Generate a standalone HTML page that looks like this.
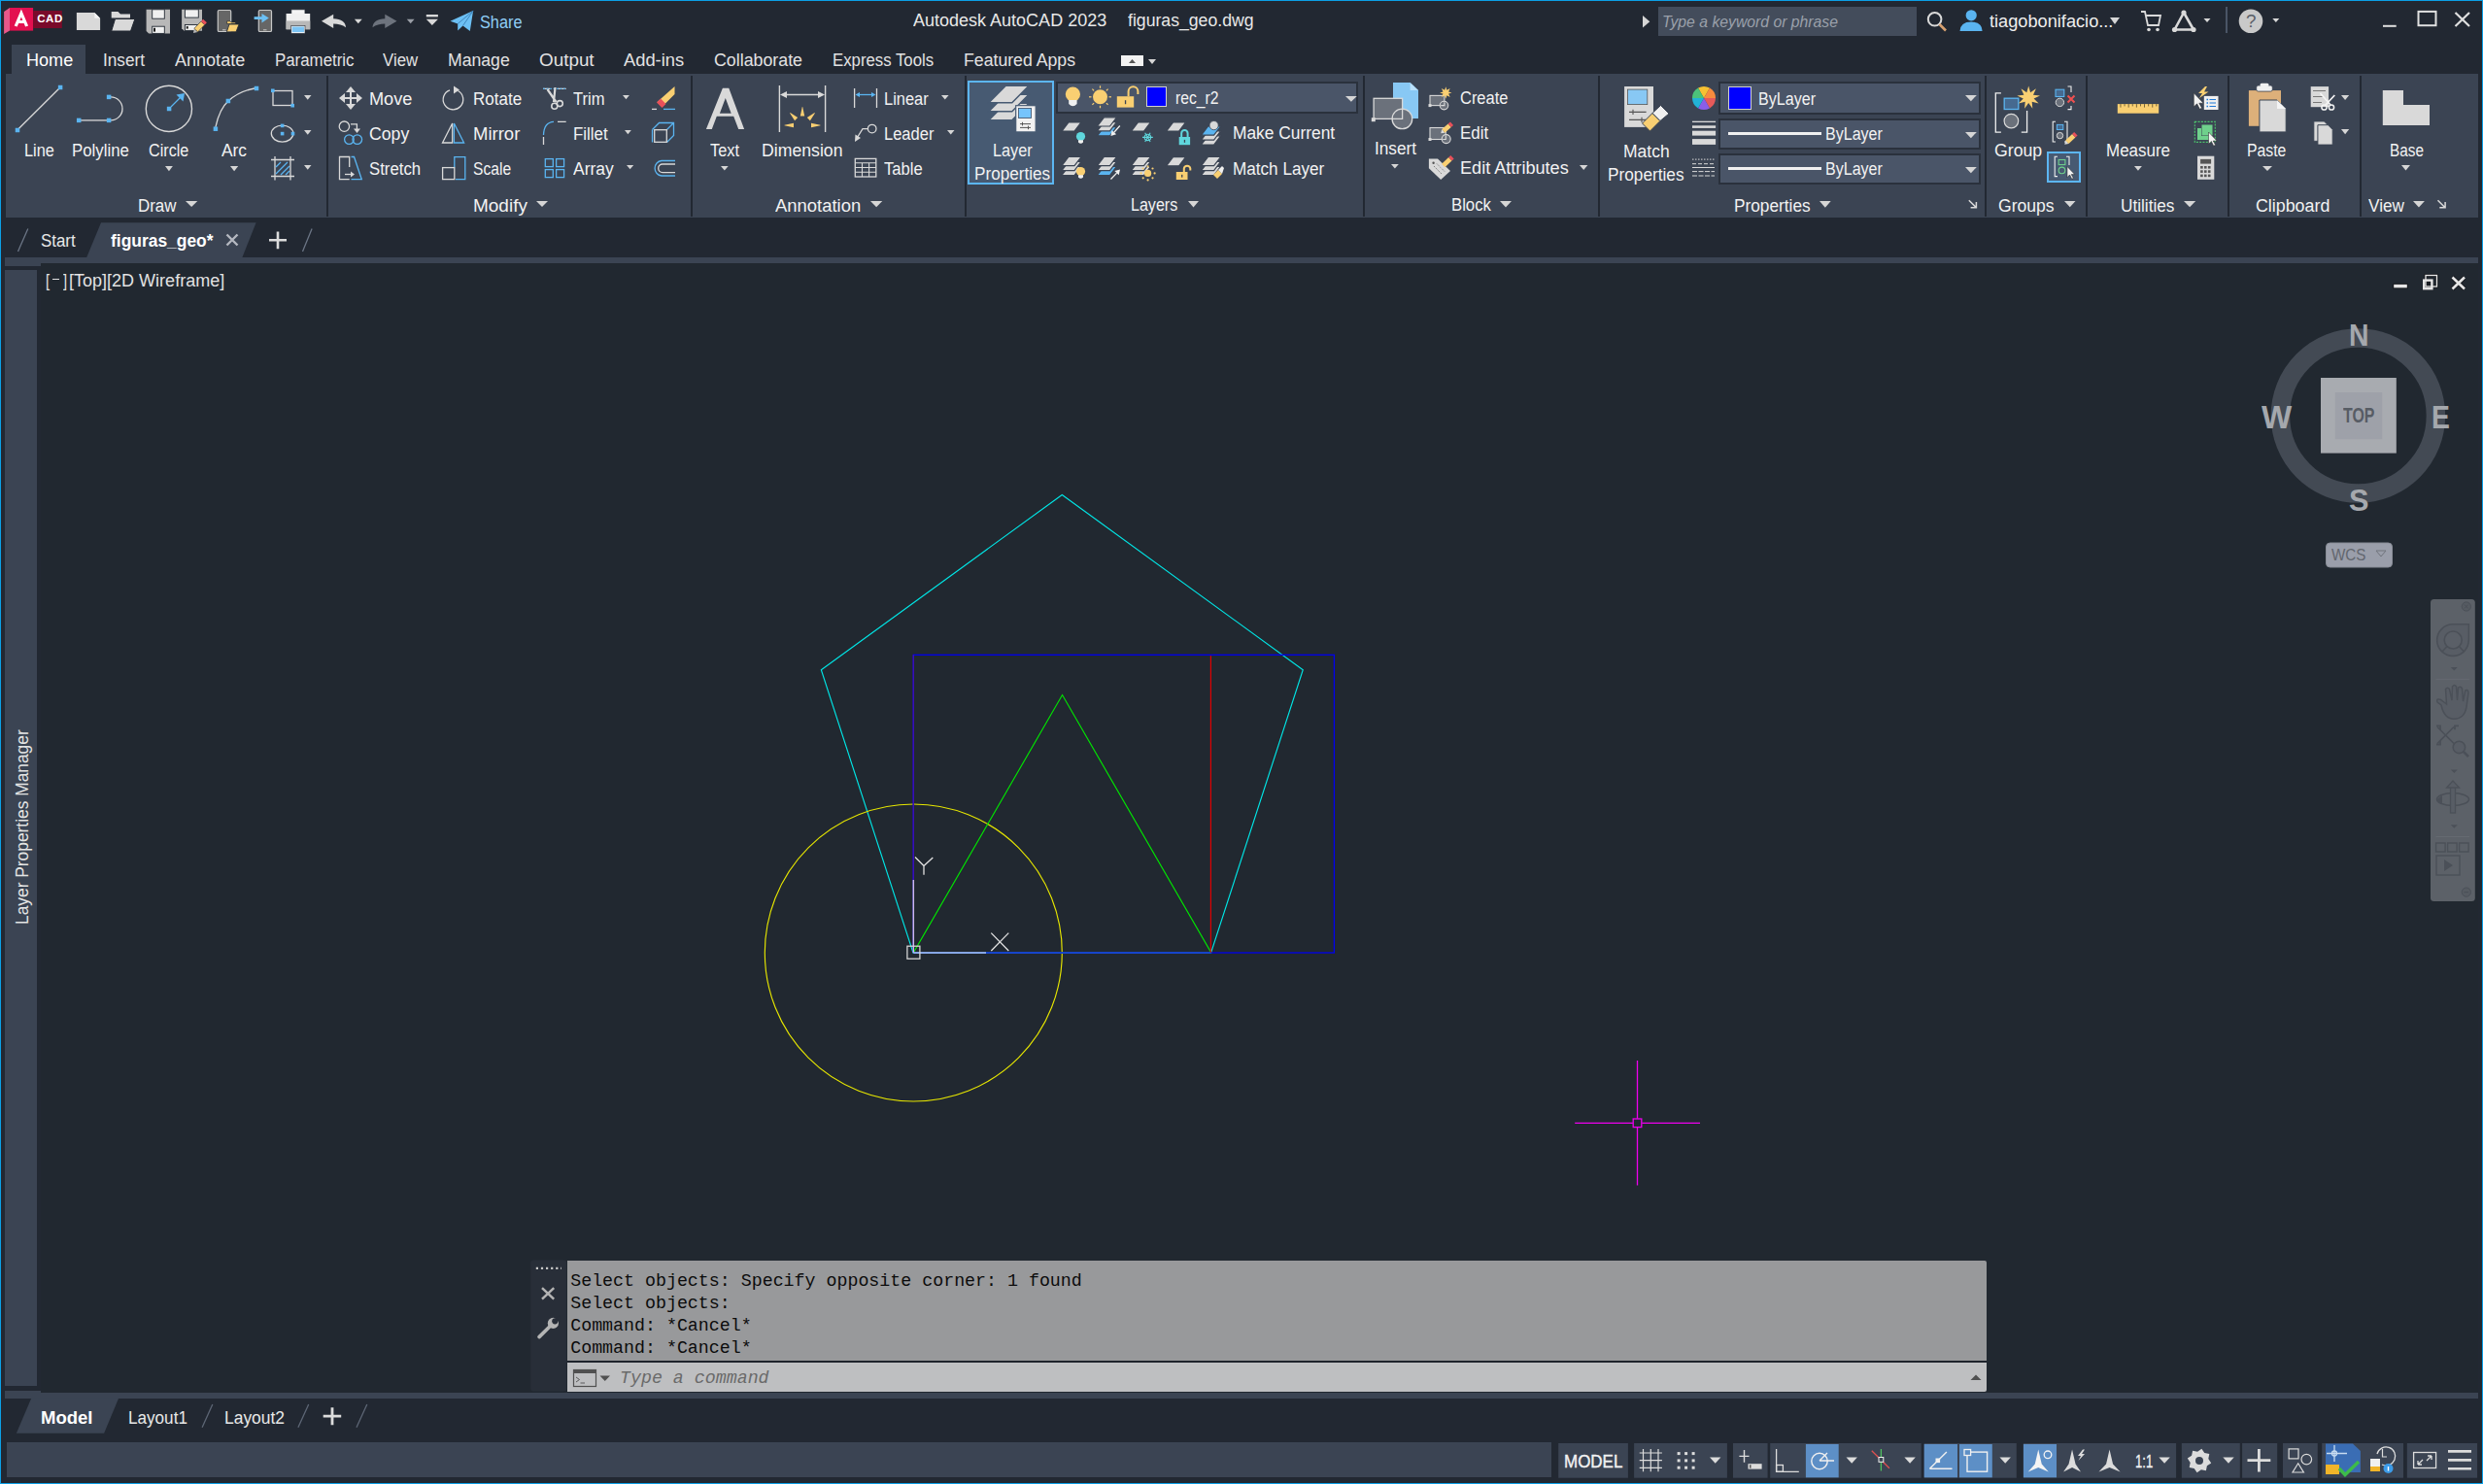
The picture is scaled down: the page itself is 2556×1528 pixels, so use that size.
<!DOCTYPE html><html><head><meta charset="utf-8"><style>
html,body{margin:0;padding:0;}
body{width:2556px;height:1528px;position:relative;overflow:hidden;background:#222832;font-family:"Liberation Sans",sans-serif;}
.t{position:absolute;white-space:nowrap;line-height:1;}
.r{position:absolute;}
svg.r{overflow:visible;}
</style></head><body>
<div class="r" style="left:12px;top:46px;width:76px;height:30px;background:#3b4453;"></div>
<div class="r" style="left:6px;top:76px;width:2545px;height:148px;background:#3b4453;"></div>
<div class="r" style="left:336px;top:78px;width:2px;height:145px;background:#222832;"></div>
<div class="r" style="left:711px;top:78px;width:2px;height:145px;background:#222832;"></div>
<div class="r" style="left:993px;top:78px;width:2px;height:145px;background:#222832;"></div>
<div class="r" style="left:1403px;top:78px;width:2px;height:145px;background:#222832;"></div>
<div class="r" style="left:1645px;top:78px;width:2px;height:145px;background:#222832;"></div>
<div class="r" style="left:2043px;top:78px;width:2px;height:145px;background:#222832;"></div>
<div class="r" style="left:2147px;top:78px;width:2px;height:145px;background:#222832;"></div>
<div class="r" style="left:2293px;top:78px;width:2px;height:145px;background:#222832;"></div>
<div class="r" style="left:2429px;top:78px;width:2px;height:145px;background:#222832;"></div>
<svg class="r" style="left:0px;top:0px;" width="400" height="300" viewBox="0 0 400 300"><polygon points="104,229.2 263.6,229.2 249.2,265.5 89,265.5" fill="#3b4453"/></svg>
<div class="r" style="left:5px;top:265px;width:2546px;height:6px;background:#3b4453;"></div>
<div class="r" style="left:5px;top:271px;width:37px;height:3px;background:#3b4453;"></div>
<div class="r" style="left:42px;top:271px;width:2509px;height:1163px;background:#212830;"></div>
<div class="r" style="left:5px;top:278px;width:33px;height:1149px;background:#3b4453;"></div>
<div class="r" style="left:42px;top:1434px;width:2509px;height:6px;background:#3b4453;"></div>
<div class="r" style="left:5px;top:1432px;width:37px;height:8px;background:#3b4453;"></div>
<svg class="r" style="left:0px;top:0px;" width="200" height="1528" viewBox="0 0 200 1528"><polygon points="32.2,1439.8 122.1,1439.8 107.1,1475.7 16.9,1475.7" fill="#3b4453"/></svg>
<div class="r" style="left:6.8px;top:1485px;width:1590px;height:36px;background:#3b4453;"></div>
<div class="r" style="left:0px;top:0px;width:2556px;height:1px;background:#0ba0e6;"></div>
<div class="r" style="left:0px;top:0px;width:1px;height:1528px;background:#0ba0e6;"></div>
<div class="r" style="left:2555px;top:0px;width:1px;height:1528px;background:#0ba0e6;"></div>
<div class="r" style="left:0px;top:1527px;width:2556px;height:1px;background:#0ba0e6;"></div>
<div class="t" style="left:939.6px;top:11.8px;font-size:18px;color:#e8e8e8;transform:scaleX(1.0003);transform-origin:0 0;">Autodesk AutoCAD 2023</div>
<div class="t" style="left:1160.5px;top:11.8px;font-size:18px;color:#e8e8e8;transform:scaleX(0.9804);transform-origin:0 0;">figuras_geo.dwg</div>
<div class="t" style="left:26.5px;top:53.1px;font-size:18px;color:#ffffff;transform:scaleX(1.0038);transform-origin:0 0;">Home</div>
<div class="t" style="left:105.7px;top:53.1px;font-size:18px;color:#e2e2e2;transform:scaleX(0.9552);transform-origin:0 0;">Insert</div>
<div class="t" style="left:179.6px;top:53.1px;font-size:18px;color:#e2e2e2;transform:scaleX(1.0019);transform-origin:0 0;">Annotate</div>
<div class="t" style="left:282.7px;top:53.1px;font-size:18px;color:#e2e2e2;transform:scaleX(0.9365);transform-origin:0 0;">Parametric</div>
<div class="t" style="left:394.3px;top:53.1px;font-size:18px;color:#e2e2e2;transform:scaleX(0.9330);transform-origin:0 0;">View</div>
<div class="t" style="left:461.3px;top:53.1px;font-size:18px;color:#e2e2e2;transform:scaleX(0.9792);transform-origin:0 0;">Manage</div>
<div class="t" style="left:555.4px;top:53.1px;font-size:18px;color:#e2e2e2;transform:scaleX(1.0475);transform-origin:0 0;">Output</div>
<div class="t" style="left:642.4px;top:53.1px;font-size:18px;color:#e2e2e2;transform:scaleX(1.0175);transform-origin:0 0;">Add-ins</div>
<div class="t" style="left:735.2px;top:53.1px;font-size:18px;color:#e2e2e2;transform:scaleX(0.9885);transform-origin:0 0;">Collaborate</div>
<div class="t" style="left:856.6px;top:53.1px;font-size:18px;color:#e2e2e2;transform:scaleX(0.9318);transform-origin:0 0;">Express Tools</div>
<div class="t" style="left:991.6px;top:53.1px;font-size:18px;color:#e2e2e2;transform:scaleX(0.9822);transform-origin:0 0;">Featured Apps</div>
<div class="r" style="left:1154px;top:57px;width:23px;height:11px;background:#f2f2f2;"></div>
<svg class="r" style="left:1162px;top:61px" width="7.0" height="4.0"><polygon points="0,4 3.5,0 7,4" fill="#555"/></svg>
<svg class="r" style="left:1182px;top:61px" width="8.0" height="5.0"><polygon points="0,0 8,0 4.0,5" fill="#d6d6d6"/></svg>
<div class="t" style="left:494.4px;top:13.8px;font-size:18px;color:#8fcdf5;transform:scaleX(0.9056);transform-origin:0 0;">Share</div>
<div class="r" style="left:1707px;top:7px;width:266px;height:30px;background:#434c5b;"></div>
<div class="t" style="left:1710.5px;top:14.1px;font-size:17px;color:#9aa0aa;transform:scaleX(0.9269);transform-origin:0 0;font-style:italic;">Type a keyword or phrase</div>
<svg class="r" style="left:1690.6px;top:16.2px" width="8" height="13"><polygon points="0,0 7.3,6.3 0,12.6" fill="#d6d6d6"/></svg>
<div class="t" style="left:2048.0px;top:12.8px;font-size:18px;color:#eeeeee;transform:scaleX(1.0104);transform-origin:0 0;">tiagobonifacio...</div>
<svg class="r" style="left:2172px;top:18px" width="10.0" height="7.0"><polygon points="0,0 10,0 5.0,7" fill="#d6d6d6"/></svg>
<div class="r" style="left:2291px;top:7px;width:2px;height:27px;background:#4a5566;"></div>
<div class="t" style="left:25.3px;top:145.9px;font-size:18px;color:#f2f2f2;transform:scaleX(0.9050);transform-origin:0 0;">Line</div>
<div class="t" style="left:73.9px;top:145.9px;font-size:18px;color:#f2f2f2;transform:scaleX(0.9344);transform-origin:0 0;">Polyline</div>
<div class="t" style="left:153.4px;top:145.9px;font-size:18px;color:#f2f2f2;transform:scaleX(0.8977);transform-origin:0 0;">Circle</div>
<div class="t" style="left:228.0px;top:145.9px;font-size:18px;color:#f2f2f2;transform:scaleX(0.9629);transform-origin:0 0;">Arc</div>
<div class="t" style="left:142.4px;top:202.5px;font-size:18px;color:#f2f2f2;transform:scaleX(0.9380);transform-origin:0 0;">Draw</div>
<svg class="r" style="left:191px;top:206.7px" width="12.3" height="6.1"><polygon points="0,0 12.300000000000011,0 6.150000000000006,6.100000000000023" fill="#d6d6d6"/></svg>
<svg class="r" style="left:169.8px;top:170.6px" width="7.9" height="5.3"><polygon points="0,0 7.899999999999977,0 3.9499999999999886,5.300000000000011" fill="#d6d6d6"/></svg>
<svg class="r" style="left:236.9px;top:170.6px" width="8.2" height="5.3"><polygon points="0,0 8.199999999999989,0 4.099999999999994,5.300000000000011" fill="#d6d6d6"/></svg>
<svg class="r" style="left:312.9px;top:97.8px" width="7.5" height="4.8"><polygon points="0,0 7.5,0 3.75,4.799999999999997" fill="#d6d6d6"/></svg>
<svg class="r" style="left:312.9px;top:134px" width="7.5" height="4.8"><polygon points="0,0 7.5,0 3.75,4.800000000000011" fill="#d6d6d6"/></svg>
<svg class="r" style="left:312.9px;top:169.7px" width="7.5" height="4.8"><polygon points="0,0 7.5,0 3.75,4.800000000000011" fill="#d6d6d6"/></svg>
<div class="t" style="left:380.4px;top:92.8px;font-size:18px;color:#f2f2f2;transform:scaleX(1.0087);transform-origin:0 0;">Move</div>
<div class="t" style="left:486.7px;top:92.8px;font-size:18px;color:#f2f2f2;transform:scaleX(0.9447);transform-origin:0 0;">Rotate</div>
<div class="t" style="left:590.0px;top:92.8px;font-size:18px;color:#f2f2f2;transform:scaleX(0.9202);transform-origin:0 0;">Trim</div>
<div class="t" style="left:380.4px;top:128.6px;font-size:18px;color:#f2f2f2;transform:scaleX(0.9828);transform-origin:0 0;">Copy</div>
<div class="t" style="left:486.7px;top:128.6px;font-size:18px;color:#f2f2f2;transform:scaleX(1.0279);transform-origin:0 0;">Mirror</div>
<div class="t" style="left:590.4px;top:128.6px;font-size:18px;color:#f2f2f2;transform:scaleX(0.9367);transform-origin:0 0;">Fillet</div>
<div class="t" style="left:380.4px;top:164.8px;font-size:18px;color:#f2f2f2;transform:scaleX(0.9312);transform-origin:0 0;">Stretch</div>
<div class="t" style="left:486.7px;top:164.8px;font-size:18px;color:#f2f2f2;transform:scaleX(0.8683);transform-origin:0 0;">Scale</div>
<div class="t" style="left:590.0px;top:164.8px;font-size:18px;color:#f2f2f2;transform:scaleX(0.9696);transform-origin:0 0;">Array</div>
<svg class="r" style="left:641.3px;top:98.4px" width="6.9" height="4.2"><polygon points="0,0 6.900000000000091,0 3.4500000000000455,4.199999999999989" fill="#d6d6d6"/></svg>
<svg class="r" style="left:642.9px;top:134.3px" width="6.8" height="4.2"><polygon points="0,0 6.800000000000068,0 3.400000000000034,4.199999999999989" fill="#d6d6d6"/></svg>
<svg class="r" style="left:644.8px;top:170.3px" width="7.2" height="4.2"><polygon points="0,0 7.2000000000000455,0 3.6000000000000227,4.199999999999989" fill="#d6d6d6"/></svg>
<div class="t" style="left:486.7px;top:202.5px;font-size:18px;color:#f2f2f2;transform:scaleX(1.0544);transform-origin:0 0;">Modify</div>
<svg class="r" style="left:552px;top:206.7px" width="12.0" height="6.1"><polygon points="0,0 12,0 6.0,6.100000000000023" fill="#d6d6d6"/></svg>
<div class="t" style="left:731.0px;top:145.6px;font-size:18px;color:#f2f2f2;transform:scaleX(0.9088);transform-origin:0 0;">Text</div>
<div class="t" style="left:784.2px;top:145.6px;font-size:18px;color:#f2f2f2;transform:scaleX(0.9819);transform-origin:0 0;">Dimension</div>
<svg class="r" style="left:742px;top:170.9px" width="7.7" height="4.5"><polygon points="0,0 7.7000000000000455,0 3.8500000000000227,4.5" fill="#d6d6d6"/></svg>
<div class="t" style="left:910.3px;top:92.8px;font-size:18px;color:#f2f2f2;transform:scaleX(0.9133);transform-origin:0 0;">Linear</div>
<div class="t" style="left:910.3px;top:128.5px;font-size:18px;color:#f2f2f2;transform:scaleX(0.9170);transform-origin:0 0;">Leader</div>
<div class="t" style="left:910.3px;top:164.7px;font-size:18px;color:#f2f2f2;transform:scaleX(0.9226);transform-origin:0 0;">Table</div>
<svg class="r" style="left:968.7px;top:98px" width="7.6" height="4.4"><polygon points="0,0 7.599999999999909,0 3.7999999999999545,4.400000000000006" fill="#d6d6d6"/></svg>
<svg class="r" style="left:974.5px;top:134px" width="7.5" height="4.4"><polygon points="0,0 7.5,0 3.75,4.400000000000006" fill="#d6d6d6"/></svg>
<div class="t" style="left:798.2px;top:202.5px;font-size:18px;color:#f2f2f2;transform:scaleX(1.0247);transform-origin:0 0;">Annotation</div>
<svg class="r" style="left:895.7px;top:206.7px" width="12.3" height="6.3"><polygon points="0,0 12.299999999999955,0 6.149999999999977,6.300000000000011" fill="#d6d6d6"/></svg>
<div class="r" style="left:996.4px;top:82.7px;width:88.6px;height:107px;background:#475a72;border:2px solid #5cb6f2;box-sizing:border-box;"></div>
<div class="t" style="left:1022.0px;top:145.7px;font-size:18px;color:#f2f2f2;transform:scaleX(0.9039);transform-origin:0 0;">Layer</div>
<div class="t" style="left:1003.2px;top:170.2px;font-size:18px;color:#f2f2f2;transform:scaleX(0.9520);transform-origin:0 0;">Properties</div>
<div class="r" style="left:1087.3px;top:84.4px;width:311.2px;height:32.2px;background:#4a5568;border:2px solid #2a313c;box-sizing:border-box;"></div>
<div class="t" style="left:1209.6px;top:91.9px;font-size:18px;color:#f2f2f2;transform:scaleX(0.8741);transform-origin:0 0;">rec_r2</div>
<svg class="r" style="left:1385px;top:99px" width="11.8" height="5.7"><polygon points="0,0 11.799999999999955,0 5.899999999999977,5.700000000000003" fill="#d6d6d6"/></svg>
<div class="r" style="left:1179.8px;top:89px;width:21.2px;height:20.8px;background:#0000ff;border:1.5px solid #d0d0d0;box-sizing:border-box;"></div>
<div class="t" style="left:1268.8px;top:128.4px;font-size:18px;color:#f2f2f2;transform:scaleX(0.9648);transform-origin:0 0;">Make Current</div>
<div class="t" style="left:1268.8px;top:164.6px;font-size:18px;color:#f2f2f2;transform:scaleX(0.9511);transform-origin:0 0;">Match Layer</div>
<div class="t" style="left:1164.2px;top:202.4px;font-size:18px;color:#f2f2f2;transform:scaleX(0.8921);transform-origin:0 0;">Layers</div>
<svg class="r" style="left:1222.6px;top:206.9px" width="11.0" height="6.4"><polygon points="0,0 11.0,0 5.5,6.400000000000006" fill="#d6d6d6"/></svg>
<div class="t" style="left:1414.8px;top:144.0px;font-size:18px;color:#f2f2f2;transform:scaleX(0.9552);transform-origin:0 0;">Insert</div>
<svg class="r" style="left:1431.7px;top:169px" width="7.8" height="4.6"><polygon points="0,0 7.7999999999999545,0 3.8999999999999773,4.599999999999994" fill="#d6d6d6"/></svg>
<div class="t" style="left:1502.6px;top:92.4px;font-size:18px;color:#f2f2f2;transform:scaleX(0.9143);transform-origin:0 0;">Create</div>
<div class="t" style="left:1502.6px;top:128.3px;font-size:18px;color:#f2f2f2;transform:scaleX(0.9414);transform-origin:0 0;">Edit</div>
<div class="t" style="left:1502.6px;top:164.3px;font-size:18px;color:#f2f2f2;transform:scaleX(1.0057);transform-origin:0 0;">Edit Attributes</div>
<svg class="r" style="left:1626.3px;top:169.6px" width="8.4" height="5.0"><polygon points="0,0 8.400000000000091,0 4.2000000000000455,5.0" fill="#d6d6d6"/></svg>
<div class="t" style="left:1493.7px;top:202.4px;font-size:18px;color:#f2f2f2;transform:scaleX(0.9292);transform-origin:0 0;">Block</div>
<svg class="r" style="left:1543.8px;top:206.6px" width="12.0" height="6.4"><polygon points="0,0 12.0,0 6.0,6.400000000000006" fill="#d6d6d6"/></svg>
<div class="t" style="left:1670.7px;top:146.7px;font-size:18px;color:#f2f2f2;transform:scaleX(0.9711);transform-origin:0 0;">Match</div>
<div class="t" style="left:1654.9px;top:171.3px;font-size:18px;color:#f2f2f2;transform:scaleX(0.9568);transform-origin:0 0;">Properties</div>
<div class="r" style="left:1769.3px;top:84.4px;width:269.4px;height:33.3px;background:#4a5568;border:2px solid #2a313c;box-sizing:border-box;"></div>
<div class="r" style="left:1769.3px;top:121.6px;width:269.4px;height:32.20000000000002px;background:#4a5568;border:2px solid #2a313c;box-sizing:border-box;"></div>
<div class="r" style="left:1769.3px;top:157.5px;width:269.4px;height:32.400000000000006px;background:#4a5568;border:2px solid #2a313c;box-sizing:border-box;"></div>
<div class="r" style="left:1779px;top:89.3px;width:23.8px;height:23.5px;background:#0000ff;border:1.5px solid #d0d0d0;box-sizing:border-box;"></div>
<div class="t" style="left:1810.0px;top:93.1px;font-size:18px;color:#f2f2f2;transform:scaleX(0.8935);transform-origin:0 0;">ByLayer</div>
<div class="r" style="left:1779px;top:136px;width:96px;height:3px;background:#f0f0f0;"></div>
<div class="r" style="left:1779px;top:172px;width:96px;height:3px;background:#f0f0f0;"></div>
<div class="t" style="left:1878.9px;top:128.5px;font-size:18px;color:#f2f2f2;transform:scaleX(0.8920);transform-origin:0 0;">ByLayer</div>
<div class="t" style="left:1878.9px;top:164.6px;font-size:18px;color:#f2f2f2;transform:scaleX(0.8920);transform-origin:0 0;">ByLayer</div>
<svg class="r" style="left:2023px;top:98px" width="11.8" height="6.2"><polygon points="0,0 11.799999999999955,0 5.899999999999977,6.200000000000003" fill="#d6d6d6"/></svg>
<svg class="r" style="left:2023px;top:136px" width="11.8" height="6.2"><polygon points="0,0 11.799999999999955,0 5.899999999999977,6.199999999999989" fill="#d6d6d6"/></svg>
<svg class="r" style="left:2023px;top:172px" width="11.8" height="6.2"><polygon points="0,0 11.799999999999955,0 5.899999999999977,6.199999999999989" fill="#d6d6d6"/></svg>
<div class="t" style="left:1784.8px;top:202.6px;font-size:18px;color:#f2f2f2;transform:scaleX(0.9581);transform-origin:0 0;">Properties</div>
<svg class="r" style="left:1873px;top:206.6px" width="11.7" height="6.7"><polygon points="0,0 11.700000000000045,0 5.850000000000023,6.700000000000017" fill="#d6d6d6"/></svg>
<div class="t" style="left:2052.6px;top:145.7px;font-size:18px;color:#f2f2f2;transform:scaleX(0.9834);transform-origin:0 0;">Group</div>
<div class="r" style="left:2106.5px;top:155.5px;width:35.5px;height:32.5px;background:#475a72;border:2px solid #5cb6f2;box-sizing:border-box;"></div>
<div class="t" style="left:2057.3px;top:202.6px;font-size:18px;color:#f2f2f2;transform:scaleX(0.9758);transform-origin:0 0;">Groups</div>
<svg class="r" style="left:2124.5px;top:206.8px" width="11.5" height="6.2"><polygon points="0,0 11.5,0 5.75,6.199999999999989" fill="#d6d6d6"/></svg>
<div class="t" style="left:2167.7px;top:145.9px;font-size:18px;color:#f2f2f2;transform:scaleX(0.9424);transform-origin:0 0;">Measure</div>
<svg class="r" style="left:2196.5px;top:170.7px" width="7.9" height="4.7"><polygon points="0,0 7.900000000000091,0 3.9500000000000455,4.700000000000017" fill="#d6d6d6"/></svg>
<div class="t" style="left:2183.0px;top:202.6px;font-size:18px;color:#f2f2f2;transform:scaleX(0.9550);transform-origin:0 0;">Utilities</div>
<svg class="r" style="left:2247.8px;top:206.8px" width="12.2" height="6.2"><polygon points="0,0 12.199999999999818,0 6.099999999999909,6.199999999999989" fill="#d6d6d6"/></svg>
<div class="t" style="left:2313.4px;top:145.5px;font-size:18px;color:#f2f2f2;transform:scaleX(0.8755);transform-origin:0 0;">Paste</div>
<svg class="r" style="left:2328.5px;top:171px" width="10.0" height="5.0"><polygon points="0,0 10.0,0 5.0,5" fill="#d6d6d6"/></svg>
<svg class="r" style="left:2409.5px;top:98px" width="8.2" height="5.0"><polygon points="0,0 8.199999999999818,0 4.099999999999909,5" fill="#d6d6d6"/></svg>
<svg class="r" style="left:2409.5px;top:133.4px" width="8.2" height="5.2"><polygon points="0,0 8.199999999999818,0 4.099999999999909,5.199999999999989" fill="#d6d6d6"/></svg>
<div class="t" style="left:2322.4px;top:202.6px;font-size:18px;color:#f2f2f2;transform:scaleX(0.9903);transform-origin:0 0;">Clipboard</div>
<div class="t" style="left:2459.9px;top:145.5px;font-size:18px;color:#f2f2f2;transform:scaleX(0.8506);transform-origin:0 0;">Base</div>
<svg class="r" style="left:2472px;top:170px" width="9.0" height="5.4"><polygon points="0,0 9,0 4.5,5.400000000000006" fill="#d6d6d6"/></svg>
<div class="t" style="left:2438.0px;top:202.6px;font-size:18px;color:#f2f2f2;transform:scaleX(0.9537);transform-origin:0 0;">View</div>
<svg class="r" style="left:2483.9px;top:207px" width="11.9" height="6.5"><polygon points="0,0 11.900000000000091,0 5.9500000000000455,6.5" fill="#d6d6d6"/></svg>
<svg class="r" style="left:0;top:0" width="2556" height="260"><line x1="19" y1="132.8" x2="61" y2="91" stroke="#d9d9d9" stroke-width="1.3"/><rect x="15.75" y="131.75" width="4.5" height="4.5" fill="#5ab4f0"/><rect x="59.85" y="87.75" width="4.5" height="4.5" fill="#5ab4f0"/><line x1="82" y1="123.9" x2="111" y2="123.9" stroke="#d9d9d9" stroke-width="1.3"/><path d="M114,99.9 A12,12 0 0 1 114,123.9" fill="none" stroke="#d9d9d9" stroke-width="1.3"/><rect x="78.95" y="121.65" width="4.5" height="4.5" fill="#5ab4f0"/><rect x="109.85" y="121.65" width="4.5" height="4.5" fill="#5ab4f0"/><rect x="109.85" y="97.65" width="4.5" height="4.5" fill="#5ab4f0"/><circle cx="173.9" cy="111.9" r="23.6" fill="none" stroke="#d9d9d9" stroke-width="1.4"/><rect x="171.85" y="109.75" width="4.5" height="4.5" fill="#5ab4f0"/><line x1="176" y1="110" x2="186" y2="100" stroke="#5ab4f0" stroke-width="1.3"/><polygon points="190,96 188.5,104.5 181.5,97.5" fill="#5ab4f0"/><path d="M221.9,130.8 Q226,112 235,104 Q246,94 262,91" fill="none" stroke="#d9d9d9" stroke-width="1.3"/><rect x="219.65" y="130.45" width="4.5" height="4.5" fill="#5ab4f0"/><rect x="232.65" y="101.75" width="4.5" height="4.5" fill="#5ab4f0"/><rect x="261.75" y="88.75" width="4.5" height="4.5" fill="#5ab4f0"/><rect x="281" y="93.5" width="20" height="15" fill="none" stroke="#d9d9d9" stroke-width="1.3"/><rect x="279.00" y="91.50" width="3.6" height="3.6" fill="#5ab4f0"/><rect x="299.40" y="106.90" width="3.6" height="3.6" fill="#5ab4f0"/><ellipse cx="290.6" cy="137.6" rx="11.3" ry="8.5" fill="none" stroke="#d9d9d9" stroke-width="1.3"/><rect x="288.80" y="127.60" width="3.6" height="3.6" fill="#5ab4f0"/><rect x="288.80" y="135.80" width="3.6" height="3.6" fill="#5ab4f0"/><rect x="299.70" y="135.80" width="3.6" height="3.6" fill="#5ab4f0"/><path d="M279,164.5 H303 M279,181.5 H303 M283,161 V185.5 M299,161 V185.5" stroke="#d9d9d9" stroke-width="1.3"/><path d="M284,172 L289,167 M284,179 L296,167 M289,180 L298,171 M294,180 L298,176" stroke="#5ab4f0" stroke-width="1.3"/><path d="M361,92 V110 M352,101.1 H370" stroke="#d9d9d9" stroke-width="2"/><polygon points="361,89 356,95 366,95" fill="#d9d9d9"/><polygon points="361,113 356,107 366,107" fill="#d9d9d9"/><polygon points="349,101.1 355,96.1 355,106.1" fill="#d9d9d9"/><polygon points="373,101.1 367,96.1 367,106.1" fill="#d9d9d9"/><circle cx="354.4" cy="130.2" r="5.2" fill="none" stroke="#d9d9d9" stroke-width="1.3"/><path d="M361,127.8 H367.4 V133" fill="none" stroke="#d9d9d9" stroke-width="1.3"/><polygon points="364,132.5 371,132.5 367.5,137" fill="#d9d9d9"/><circle cx="359.4" cy="143.6" r="4.8" fill="none" stroke="#5ab4f0" stroke-width="1.3"/><circle cx="367.8" cy="143.6" r="4.8" fill="none" stroke="#5ab4f0" stroke-width="1.3"/><path d="M359.7,172 V161.5 H349.5 V184.7 H359.7" fill="none" stroke="#d9d9d9" stroke-width="1.3"/><path d="M355,179.5 H363" stroke="#d9d9d9" stroke-width="1.3"/><polygon points="365,179.5 361,176.5 361,182.5" fill="#d9d9d9"/><path d="M361.5,161.5 H364.5 L372.3,184.7 H361.5" fill="none" stroke="#5ab4f0" stroke-width="1.3"/><path d="M463,92.8 A10.3,10.3 0 1 0 471.5,93.5" fill="none" stroke="#d9d9d9" stroke-width="1.3"/><polygon points="467,88.5 473,92.5 467,96.5" fill="#d9d9d9"/><polygon points="465.7,127 455.5,147 465.7,147" fill="none" stroke="#d9d9d9" stroke-width="1.3"/><polygon points="467.4,127 477.6,147 467.4,147" fill="none" stroke="#5ab4f0" stroke-width="1.3"/><path d="M467.8,172.3 V161.6 H478.8 V184.6 H469" fill="none" stroke="#5ab4f0" stroke-width="1.3"/><rect x="455.6" y="172.6" width="12.2" height="12" fill="none" stroke="#d9d9d9" stroke-width="1.3"/><path d="M559,91.3 H566 M574,91.3 H582.7" stroke="#d9d9d9" stroke-width="1.2"/><path d="M559,91.3 H582.7" stroke="#5ab4f0" stroke-width="1.2" stroke-dasharray="2,1.5" opacity="0.9"/><path d="M563.5,92 L572.5,105 M571.5,90 L570,105" stroke="#d9d9d9" stroke-width="2.2"/><circle cx="570.8" cy="109.2" r="3" fill="none" stroke="#d9d9d9" stroke-width="1.6"/><circle cx="576.3" cy="106.6" r="3" fill="none" stroke="#d9d9d9" stroke-width="1.6"/><path d="M559.5,139 Q560,126 570,125.4" fill="none" stroke="#5ab4f0" stroke-width="1.3"/><path d="M559.5,141 V149 M574,125.4 H582.7" stroke="#d9d9d9" stroke-width="1.3"/><rect x="561.3" y="163.6" width="8" height="8" fill="none" stroke="#5ab4f0" stroke-width="1.3"/><rect x="572.6" y="163.6" width="8" height="8" fill="none" stroke="#5ab4f0" stroke-width="1.3"/><rect x="561.3" y="174.6" width="8" height="8" fill="none" stroke="#5ab4f0" stroke-width="1.3"/><rect x="572.6" y="174.6" width="8" height="8" fill="none" stroke="#5ab4f0" stroke-width="1.3"/><polygon points="694.5,89 694.5,97 681.5,110 676.5,105" fill="#f9cf72"/><polygon points="680,101.5 685.5,107 681.5,111 676,105.5" fill="#e8505a"/><path d="M683,112.4 H695 " stroke="#5ab4f0" stroke-width="1.3"/><path d="M671,112.4 H676" stroke="#d9d9d9" stroke-width="1.3"/><path d="M671.5,133.5 L678.5,126.5 H693.5 V139.5 L686.5,146.5 M686.5,133.5 L693.5,126.5" fill="none" stroke="#5ab4f0" stroke-width="1.3"/><path d="M671.5,133.5 V146.5" stroke="#5ab4f0" stroke-width="1.3"/><rect x="673.7" y="133.7" width="12.6" height="12.6" fill="none" stroke="#d9d9d9" stroke-width="1.3"/><path d="M695,165.5 H681 A7.8,7.8 0 0 0 681,181 H695" fill="none" stroke="#5ab4f0" stroke-width="1.3"/><path d="M695,169 H682 A4.3,4.3 0 0 0 682,177.6 H695" fill="none" stroke="#d9d9d9" stroke-width="1.3"/><path fill-rule="evenodd" d="M743.9,90.7 L750.3,90.7 L766.1,133.1 L760.2,133.1 L755.2,119.7 L737.8,119.7 L732.8,133.1 L726.9,133.1 Z M746.8,101 L740.9,116.8 L752.7,116.8 Z" fill="#d9d9d9"/><path d="M802.4,88 V136 M849.6,88 V136 M806,97.5 H846" stroke="#d9d9d9" stroke-width="1.4"/><polygon points="803,97.5 810,94 810,101" fill="#d9d9d9"/><polygon points="849,97.5 842,94 842,101" fill="#d9d9d9"/><polygon points="817.0,126.8 807.5,128.8 807.5,129.2 817.0,131.2" fill="#f9cf72"/><polygon points="821.2,121.1 813.4,116.1 813.1,116.4 818.1,124.2" fill="#f9cf72"/><polygon points="828.2,119.5 826.2,110.0 825.8,110.0 823.8,119.5" fill="#f9cf72"/><polygon points="833.9,124.2 838.9,116.4 838.6,116.1 830.8,121.1" fill="#f9cf72"/><polygon points="835.0,131.2 844.5,129.2 844.5,128.8 835.0,126.8" fill="#f9cf72"/><path d="M879.6,91 V111 M902.5,91 V111" stroke="#d9d9d9" stroke-width="1.3"/><path d="M883,97.5 H899" stroke="#5ab4f0" stroke-width="1.3"/><polygon points="880.5,97.5 885,95 885,100" fill="#5ab4f0"/><polygon points="901.5,97.5 897,95 897,100" fill="#5ab4f0"/><circle cx="897.7" cy="132.6" r="4.3" fill="none" stroke="#d9d9d9" stroke-width="1.3"/><path d="M893.4,132.6 H888 L882.5,141.5" fill="none" stroke="#d9d9d9" stroke-width="1.3"/><polygon points="880,146 880.5,138.5 886,142" fill="#d9d9d9"/><rect x="880.3" y="163.4" width="21.5" height="18.6" fill="none" stroke="#d9d9d9" stroke-width="1.3"/><path d="M880.3,167.8 H901.8 M880.3,172.5 H901.8 M880.3,177.2 H901.8 M887.5,167.8 V182 M894.6,167.8 V182" stroke="#d9d9d9" stroke-width="1.1"/></svg>
<svg class="r" style="left:0;top:0" width="2556" height="260"><polygon points="1017.9,123.8 1035.3,106.3 1059.1,106.3 1041.8,123.8" fill="#d9d9d9" stroke="#475a72" stroke-width="1.5"/><polygon points="1017.9,114.8 1035.3,97.3 1059.1,97.3 1041.8,114.8" fill="#d9d9d9" stroke="#475a72" stroke-width="1.5"/><polygon points="1017.9,105.7 1035.3,88.2 1059.1,88.2 1041.8,105.7" fill="#d9d9d9" stroke="#475a72" stroke-width="1.5"/><rect x="1045.7" y="108.7" width="20.5" height="27.2" fill="#f2f2f2" stroke="#475a72" stroke-width="1.2"/><rect x="1048.5" y="111.5" width="13" height="10" fill="#76c4fc" stroke="#475a72" stroke-width="0.9"/><path d="M1050,127.6 H1061 M1050,131.4 H1061" stroke="#555" stroke-width="1"/><path d="M1052.5,125.8 V129.4 M1058.5,129.6 V133.2" stroke="#555" stroke-width="1"/><circle cx="1104.4" cy="97" r="7.6" fill="#f9cf72"/><path d="M1100.2,103.1 H1108.6 V106.9 Q1104.4,111.4 1100.2,106.9 Z" fill="#f0f0f0"/><circle cx="1132.5" cy="99.8" r="7.5" fill="#f9cf72"/><line x1="1141.5" y1="99.8" x2="1144.0" y2="99.8" stroke="#f9cf72" stroke-width="1.2"/><line x1="1138.9" y1="106.2" x2="1140.6" y2="107.9" stroke="#f9cf72" stroke-width="1.2"/><line x1="1132.5" y1="108.8" x2="1132.5" y2="111.3" stroke="#f9cf72" stroke-width="1.2"/><line x1="1126.1" y1="106.2" x2="1124.4" y2="107.9" stroke="#f9cf72" stroke-width="1.2"/><line x1="1123.5" y1="99.8" x2="1121.0" y2="99.8" stroke="#f9cf72" stroke-width="1.2"/><line x1="1126.1" y1="93.4" x2="1124.4" y2="91.7" stroke="#f9cf72" stroke-width="1.2"/><line x1="1132.5" y1="90.8" x2="1132.5" y2="88.3" stroke="#f9cf72" stroke-width="1.2"/><line x1="1138.9" y1="93.4" x2="1140.6" y2="91.7" stroke="#f9cf72" stroke-width="1.2"/><rect x="1149.8" y="99.2" width="17.40000000000009" height="11.399999999999991" fill="#f9cf72"/><rect x="1157.9" y="103.2" width="1.3" height="4.0" fill="#3b4453"/><path d="M1161.6,99.2 V94.1 A4.9,4.9 0 0 1 1171.4,94.1 V96.9" fill="none" stroke="#f9cf72" stroke-width="2"/><polygon points="1093.0,135.1 1100.0,125.9 1113.0,125.9 1106.0,135.1" fill="#d9d9d9" stroke="#3b4453" stroke-width="1.2"/><circle cx="1112.5" cy="140.5" r="4.6" fill="#5fd6dc"/><path d="M1110.0,144.2 H1115.0 V146.5 Q1112.5,149.2 1110.0,146.5 Z" fill="#f0f0f0"/><polygon points="1129.5,139.8 1136.5,130.6 1149.5,130.6 1142.5,139.8" fill="#5ab4f0" stroke="#3b4453" stroke-width="1.2"/><polygon points="1129.5,134.9 1136.5,125.7 1149.5,125.7 1142.5,134.9" fill="#d9d9d9" stroke="#3b4453" stroke-width="1.2"/><polygon points="1129.5,130.0 1136.5,120.8 1149.5,120.8 1142.5,130.0" fill="#d9d9d9" stroke="#3b4453" stroke-width="1.2"/><line x1="1152.8" y1="129.5" x2="1146.8" y2="136.3" stroke="#f0f0f0" stroke-width="1.3"/><polygon points="1143.5,140 1144.6,134.3 1149.1,138.2" fill="#f0f0f0"/><polygon points="1164.5,135.1 1171.5,125.9 1184.5,125.9 1177.5,135.1" fill="#d9d9d9" stroke="#3b4453" stroke-width="1.2"/><g stroke="#5fd6dc" stroke-width="1.1" fill="none"><circle cx="1181.4" cy="141.4" r="3.2"/><path d="M1176,141.4 H1186.8 M1178.7,136.8 L1184.1,146 M1184.1,136.8 L1178.7,146"/></g><polygon points="1200.6,135.1 1207.6,125.9 1220.6,125.9 1213.6,135.1" fill="#d9d9d9" stroke="#3b4453" stroke-width="1.2"/><rect x="1213.7" y="141" width="11.399999999999864" height="8.199999999999989" fill="#5fd6dc"/><rect x="1218.8" y="143.9" width="1.3" height="2.9" fill="#3b4453"/><path d="M1216.2,141 V137.3 A3.2,3.2 0 0 1 1222.6,137.3 V141" fill="none" stroke="#5fd6dc" stroke-width="2"/><polygon points="1236.6,149.0 1243.6,139.8 1256.6,139.8 1249.6,149.0" fill="#d9d9d9" stroke="#3b4453" stroke-width="1.2"/><polygon points="1236.6,144.1 1243.6,134.9 1256.6,134.9 1249.6,144.1" fill="#d9d9d9" stroke="#3b4453" stroke-width="1.2"/><polygon points="1236.6,139.2 1243.6,130.0 1256.6,130.0 1249.6,139.2" fill="#5ab4f0" stroke="#3b4453" stroke-width="1.2"/><circle cx="1249.6" cy="129.1" r="4.6" fill="#d9d9d9" stroke="#3b4453" stroke-width="0.8"/><polygon points="1093.0,180.5 1100.0,171.3 1113.0,171.3 1106.0,180.5" fill="#d9d9d9" stroke="#3b4453" stroke-width="1.2"/><polygon points="1093.0,175.6 1100.0,166.4 1113.0,166.4 1106.0,175.6" fill="#d9d9d9" stroke="#3b4453" stroke-width="1.2"/><polygon points="1093.0,170.7 1100.0,161.5 1113.0,161.5 1106.0,170.7" fill="#d9d9d9" stroke="#3b4453" stroke-width="1.2"/><circle cx="1112.5" cy="176.5" r="4.6" fill="#f9cf72"/><path d="M1110.0,180.2 H1115.0 V182.5 Q1112.5,185.2 1110.0,182.5 Z" fill="#f0f0f0"/><polygon points="1129.5,180.5 1136.5,171.3 1149.5,171.3 1142.5,180.5" fill="#5ab4f0" stroke="#3b4453" stroke-width="1.2"/><polygon points="1129.5,175.6 1136.5,166.4 1149.5,166.4 1142.5,175.6" fill="#d9d9d9" stroke="#3b4453" stroke-width="1.2"/><polygon points="1129.5,170.7 1136.5,161.5 1149.5,161.5 1142.5,170.7" fill="#d9d9d9" stroke="#3b4453" stroke-width="1.2"/><line x1="1143.5" y1="184.5" x2="1149.6" y2="178.1" stroke="#f0f0f0" stroke-width="1.3"/><polygon points="1153,174.5 1151.7,180.2 1147.4,176.1" fill="#f0f0f0"/><polygon points="1164.5,180.5 1171.5,171.3 1184.5,171.3 1177.5,180.5" fill="#d9d9d9" stroke="#3b4453" stroke-width="1.2"/><polygon points="1164.5,175.6 1171.5,166.4 1184.5,166.4 1177.5,175.6" fill="#d9d9d9" stroke="#3b4453" stroke-width="1.2"/><polygon points="1164.5,170.7 1171.5,161.5 1184.5,161.5 1177.5,170.7" fill="#d9d9d9" stroke="#3b4453" stroke-width="1.2"/><circle cx="1181.6" cy="178.4" r="3.6" fill="#f9cf72"/><circle cx="1188.6" cy="178.4" r="1.1" fill="#f9cf72"/><circle cx="1186.5" cy="183.3" r="1.1" fill="#f9cf72"/><circle cx="1181.6" cy="185.4" r="1.1" fill="#f9cf72"/><circle cx="1176.7" cy="183.3" r="1.1" fill="#f9cf72"/><circle cx="1174.6" cy="178.4" r="1.1" fill="#f9cf72"/><circle cx="1176.7" cy="173.5" r="1.1" fill="#f9cf72"/><circle cx="1181.6" cy="171.4" r="1.1" fill="#f9cf72"/><circle cx="1186.5" cy="173.5" r="1.1" fill="#f9cf72"/><polygon points="1200.6,170.8 1207.6,161.6 1220.6,161.6 1213.6,170.8" fill="#d9d9d9" stroke="#3b4453" stroke-width="1.2"/><rect x="1210.8" y="177" width="11.700000000000045" height="8" fill="#f9cf72"/><rect x="1216.1" y="179.8" width="1.3" height="2.8" fill="#3b4453"/><path d="M1218.8,177 V173.4 A3.3,3.3 0 0 1 1225.3,173.4 V175.4" fill="none" stroke="#f9cf72" stroke-width="2"/><polygon points="1236.6,180.5 1243.6,171.3 1256.6,171.3 1249.6,180.5" fill="#d9d9d9" stroke="#3b4453" stroke-width="1.2"/><polygon points="1236.6,175.6 1243.6,166.4 1256.6,166.4 1249.6,175.6" fill="#d9d9d9" stroke="#3b4453" stroke-width="1.2"/><polygon points="1236.6,170.7 1243.6,161.5 1256.6,161.5 1249.6,170.7" fill="#d9d9d9" stroke="#3b4453" stroke-width="1.2"/><polygon points="1249,180 1254,175 1258,179 1253,184" fill="#f9cf72"/><polygon points="1254,175 1258,171 1260,173 1258,179" fill="#f0f0f0"/><polygon points="1434,84.9 1451.6,84.9 1460,92.9 1460,121.9 1434,121.9" fill="#88c8f4"/><polygon points="1451.6,84.9 1460,92.9 1451.6,92.9" fill="#b9e0fa"/><rect x="1414.1" y="101.3" width="29.5" height="21.1" fill="#6b717b" stroke="#d9d9d9" stroke-width="1.3"/><circle cx="1443.4" cy="122.4" r="10.3" fill="#6b717b" stroke="#d9d9d9" stroke-width="1.3"/><path d="M1443.6,112 V122.4 H1433" fill="none" stroke="#d9d9d9" stroke-width="1.3"/><rect x="1411.8" y="121.2" width="4" height="4" fill="#d9d9d9"/><rect x="1472" y="98.4" width="14.900000000000091" height="10.199999999999989" fill="#6b717b" stroke="#d9d9d9" stroke-width="1.1"/><circle cx="1486.5" cy="108.6" r="4.3" fill="#6b717b" stroke="#d9d9d9" stroke-width="1.1"/><path d="M1486.9,105.3 V108.6 H1483.2" fill="none" stroke="#d9d9d9" stroke-width="1.1"/><rect x="1470.5" y="107.1" width="3" height="3" fill="#d9d9d9"/><polygon points="1494.5,95.5 1491.1,96.6 1492.7,99.9 1489.4,98.3 1488.3,101.7 1487.2,98.3 1483.9,99.9 1485.5,96.6 1482.1,95.5 1485.5,94.4 1483.9,91.1 1487.2,92.7 1488.3,89.3 1489.4,92.7 1492.7,91.1 1491.1,94.4" fill="#f9cf72"/><rect x="1472" y="131.5" width="16.299999999999955" height="12.0" fill="#6b717b" stroke="#d9d9d9" stroke-width="1.1"/><circle cx="1488.7" cy="143.1" r="4.5" fill="#6b717b" stroke="#d9d9d9" stroke-width="1.1"/><path d="M1488.3,139.6 V143.5 H1485.2" fill="none" stroke="#d9d9d9" stroke-width="1.1"/><rect x="1470.5" y="142.0" width="3" height="3" fill="#d9d9d9"/><polygon points="1483.2,137.2 1487.4,136.7 1484.3,133.1" fill="#d9d9d9"/><polygon points="1487.4,136.7 1493.8,131.1 1490.7,127.5 1484.3,133.1" fill="#f9cf72"/><polygon points="1493.8,131.1 1496.1,129.1 1492.9,125.5 1490.7,127.5" fill="#e8505a"/><polygon points="1470.9,163.5 1480,163.5 1493,175.9 1483.2,185 1470.9,173.3" fill="#d9d9d9"/><circle cx="1475.6" cy="167.8" r="1.2" fill="#555"/><path d="M1476,171 L1484,179 M1479,168.5 L1487,176.5" stroke="#777" stroke-width="0.9" stroke-dasharray="1.5,1"/><polygon points="1483.2,173 1487.4,172.3 1484.1,168.8" fill="#d9d9d9"/><polygon points="1487.4,172.3 1494.5,165.6 1491.2,162.1 1484.1,168.8" fill="#f9cf72"/><polygon points="1494.5,165.6 1496.7,163.5 1493.3,160.1 1491.2,162.1" fill="#e8505a"/></svg>
<svg class="r" style="left:0;top:0" width="2556" height="260"><rect x="1672.1" y="89" width="29.9" height="41.9" fill="#d9d9d9"/><rect x="1675.6" y="92.1" width="20.2" height="15.5" fill="#88c8f4" stroke="#555" stroke-width="0.8"/><path d="M1677,115.4 H1694.6 M1677,123.4 H1694.6 M1681,112.8 V118 M1690,120.8 V126" stroke="#555" stroke-width="1.1"/><polygon points="1690.5,127 1701,116.5 1709,124.5 1698.5,135" fill="#f9cf72" stroke="#3b4453" stroke-width="1"/><polygon points="1701,116.5 1709.5,108.5 1718,117 1709,124.5" fill="#f0f0f0" stroke="#3b4453" stroke-width="1"/><path d="M1754,101 L1748.00,90.61 A12,12 0 0 1 1760.00,90.61 Z" fill="#f7c132"/><path d="M1754,101 L1760.00,90.61 A12,12 0 0 1 1766.00,101.00 Z" fill="#f88b3e"/><path d="M1754,101 L1766.00,101.00 A12,12 0 0 1 1760.00,111.39 Z" fill="#e65a5a"/><path d="M1754,101 L1760.00,111.39 A12,12 0 0 1 1748.00,111.39 Z" fill="#8a5ee8"/><path d="M1754,101 L1748.00,111.39 A12,12 0 0 1 1742.00,101.00 Z" fill="#22b2d6"/><path d="M1754,101 L1742.00,101.00 A12,12 0 0 1 1748.00,90.61 Z" fill="#4cc27a"/><rect x="1742" y="124.7" width="24.1" height="1.3" fill="#d9d9d9"/><rect x="1742" y="129.3" width="24.1" height="2.6" fill="#d9d9d9"/><rect x="1742" y="134.7" width="24.1" height="4.9" fill="#d9d9d9"/><rect x="1742" y="143.1" width="24.1" height="5.8" fill="#d9d9d9"/><path d="M1742,164.1 H1765 " stroke="#d9d9d9" stroke-width="1" stroke-dasharray="1.5,1.5"/><path d="M1742,168.7 H1765" stroke="#d9d9d9" stroke-width="1" stroke-dasharray="4,2"/><path d="M1742,172.5 H1765" stroke="#d9d9d9" stroke-width="1"/><path d="M1742,176.6 H1765" stroke="#d9d9d9" stroke-width="1" stroke-dasharray="5,1.5"/><path d="M1742,181 H1765" stroke="#d9d9d9" stroke-width="1" stroke-dasharray="5,1.5"/><path d="M2059.9,95.8 H2054.3 V136.1 H2059.9 M2080.8,136.1 H2086.6 V114.1" fill="none" stroke="#eeeeee" stroke-width="1.3"/><rect x="2063.2" y="101.2" width="14.6" height="11.3" fill="#466a90" stroke="#5ab4f0" stroke-width="1.3"/><circle cx="2070.4" cy="124.6" r="7.3" fill="#6b717b" stroke="#d9d9d9" stroke-width="1.2"/><polygon points="2088.2,88.5 2090.1,95.3 2095.9,91.3 2093.0,97.8 2100.0,98.4 2093.6,101.5 2098.6,106.5 2091.7,104.7 2092.3,111.8 2088.2,106.0 2084.1,111.8 2084.7,104.7 2077.8,106.5 2082.8,101.5 2076.4,98.4 2083.4,97.8 2080.5,91.3 2086.3,95.3" fill="#f9cf72"/><rect x="2116" y="92.2" width="8.8" height="7.3" fill="#466a90" stroke="#5ab4f0" stroke-width="1.1"/><circle cx="2120.4" cy="105.4" r="4.2" fill="#6b717b" stroke="#d9d9d9" stroke-width="1"/><path d="M2128.5,89 H2132 V95 M2132,109 V112.6 H2128.5" fill="none" stroke="#eeeeee" stroke-width="1.1"/><path d="M2128.5,98.5 L2135.5,105.5 M2135.5,98.5 L2128.5,105.5" stroke="#f05050" stroke-width="2"/><path d="M2116,125.3 H2113.2 V146 H2116 M2125,125.3 H2128 V146 H2125" fill="none" stroke="#eeeeee" stroke-width="1.1"/><rect x="2117.4" y="128.4" width="6.4" height="5.1" fill="#466a90" stroke="#5ab4f0" stroke-width="1"/><circle cx="2120.5" cy="139.6" r="3.2" fill="#6b717b" stroke="#d9d9d9" stroke-width="1"/><polygon points="2125.3,148.7 2129.5,148.0 2126.2,144.6" fill="#d9d9d9"/><polygon points="2129.5,148.0 2136.4,141.5 2133.1,138.0 2126.2,144.6" fill="#f9cf72"/><polygon points="2136.4,141.5 2138.6,139.4 2135.2,136.0 2133.1,138.0" fill="#e8505a"/><path d="M2118,161.3 H2115.2 V181.6 H2118 M2127,161.3 H2130 V170" fill="none" stroke="#eeeeee" stroke-width="1.1"/><rect x="2119.2" y="164.5" width="6.7" height="5.1" fill="none" stroke="#6fd08c" stroke-width="1.1"/><circle cx="2122.5" cy="175.4" r="3.3" fill="none" stroke="#6fd08c" stroke-width="1.1"/><polygon points="2128.0,171.5 2128.0,182.6 2130.6,180.0 2132.7,184.2 2134.4,183.4 2132.2,179.6 2135.7,179.6" fill="#f2f2f2" stroke="#222" stroke-width="0.5"/><rect x="2179.8" y="107.1" width="42.4" height="9.6" fill="#f9cf72"/><rect x="2182.5" y="107.1" width="0.9" height="3.5" fill="#6a5a30"/><rect x="2186.6" y="107.1" width="0.9" height="2.3" fill="#6a5a30"/><rect x="2190.7" y="107.1" width="0.9" height="3.5" fill="#6a5a30"/><rect x="2194.8" y="107.1" width="0.9" height="2.3" fill="#6a5a30"/><rect x="2198.9" y="107.1" width="0.9" height="3.5" fill="#6a5a30"/><rect x="2203.0" y="107.1" width="0.9" height="2.3" fill="#6a5a30"/><rect x="2207.1" y="107.1" width="0.9" height="3.5" fill="#6a5a30"/><rect x="2211.2" y="107.1" width="0.9" height="2.3" fill="#6a5a30"/><rect x="2215.3" y="107.1" width="0.9" height="3.5" fill="#6a5a30"/><rect x="2219.4" y="107.1" width="0.9" height="2.3" fill="#6a5a30"/><polygon points="2258.3,95.8 2258.3,110.1 2261.6,106.8 2264.4,112.3 2266.6,111.2 2263.8,106.2 2268.2,106.2" fill="#f2f2f2" stroke="#222" stroke-width="0.5"/><rect x="2268.8" y="98.9" width="14.7" height="14.1" fill="#efefef"/><path d="M2271.5,102.5 h1.5 M2271.5,106 h1.5 M2271.5,109.5 h1.5" stroke="#1f7ad8" stroke-width="1.5"/><path d="M2274.5,102.5 h6.5 M2274.5,106 h6.5 M2274.5,109.5 h6.5" stroke="#1f7ad8" stroke-width="1.1"/><polygon points="2270,89 2263,96 2267,96 2264,101 2273.5,94.5 2269,94.5 2272,89" fill="#f9cf72"/><rect x="2259.3" y="125.4" width="21" height="21" fill="none" stroke="#4cc26c" stroke-width="1.1" stroke-dasharray="2,1.3"/><polygon points="2262,132 2266,132 2266,140 2274,140 2274,144 2262,144" fill="#6fd08c"/><rect x="2266.5" y="128.5" width="11" height="11" fill="#6fd08c"/><polygon points="2273.5,136.0 2273.5,148.3 2276.3,145.5 2278.7,150.2 2280.6,149.3 2278.2,145.0 2282.1,145.0" fill="#f2f2f2" stroke="#222" stroke-width="0.5"/><rect x="2262" y="160.7" width="17.3" height="24.1" fill="#d9d9d9"/><rect x="2265.1" y="163.9" width="11" height="4.7" fill="#555"/><rect x="2265.1" y="171.0" width="2.6" height="2.6" fill="#555"/><rect x="2269.0" y="171.0" width="2.6" height="2.6" fill="#555"/><rect x="2272.9" y="171.0" width="2.6" height="2.6" fill="#555"/><rect x="2265.1" y="175.3" width="2.6" height="2.6" fill="#555"/><rect x="2269.0" y="175.3" width="2.6" height="2.6" fill="#555"/><rect x="2272.9" y="175.3" width="2.6" height="2.6" fill="#555"/><rect x="2265.1" y="179.6" width="2.6" height="2.6" fill="#555"/><rect x="2269.0" y="179.6" width="2.6" height="2.6" fill="#555"/><rect x="2272.9" y="179.6" width="2.6" height="2.6" fill="#555"/><rect x="2314.9" y="93.1" width="33.1" height="36.7" fill="#ddb07a"/><rect x="2322.7" y="88" width="16.6" height="6.1" rx="2" fill="#f0f0f0" stroke="#3b4453" stroke-width="0.8"/><rect x="2326.5" y="85.8" width="9" height="3.2" rx="1.5" fill="#f0f0f0"/><polygon points="2325.9,103 2344,103 2353.2,112.1 2353.2,135.9 2325.9,135.9" fill="#d9d9d9" stroke="#3b4453" stroke-width="1"/><polygon points="2344,103 2353.2,112.1 2344,112.1" fill="#f4f4f4"/><rect x="2378.7" y="89.1" width="18.4" height="21.1" fill="#d9d9d9"/><path d="M2381,93.5 H2394 M2381,99.5 H2392 M2381,105.5 H2390" stroke="#777" stroke-width="1"/><path d="M2388.5,96 L2399,108 M2403.3,98 L2394,108" stroke="#f4f4f4" stroke-width="1.8"/><circle cx="2392.5" cy="110.5" r="2.6" fill="none" stroke="#f4f4f4" stroke-width="1.5"/><circle cx="2400" cy="110.5" r="2.6" fill="none" stroke="#f4f4f4" stroke-width="1.5"/><polygon points="2381.9,125 2392.5,125 2395.5,128 2395.5,145.3 2381.9,145.3" fill="#d9d9d9" stroke="#3b4453" stroke-width="0.8"/><polygon points="2385.9,128.7 2396.5,128.7 2401.2,133.4 2401.2,149.1 2385.9,149.1" fill="#d9d9d9" stroke="#3b4453" stroke-width="1"/><polygon points="2452.8,92.9 2474,92.9 2474,108.1 2501,108.1 2501,129.1 2452.8,129.1" fill="#d9d9d9"/><path d="M2026.8,206.2 L2033.8,213.2 M2034.3999999999999,208.0 V213.79999999999998 H2028.6" fill="none" stroke="#d9d9d9" stroke-width="1.5"/><path d="M2509.5,206.2 L2516.5,213.2 M2517.1,208.0 V213.79999999999998 H2511.3" fill="none" stroke="#d9d9d9" stroke-width="1.5"/></svg>
<svg class="r" style="left:0;top:0" width="2556" height="60"><polygon points="4.1,11.9 10,8 10,31.6 4.1,35" fill="#e8588a"/><rect x="10" y="8" width="24.1" height="23.6" fill="#e31050"/><rect x="34.1" y="11" width="29.7" height="18" fill="#7a0a2a"/><path d="M16.2,27 L21.9,13.5 L27.6,27 M18.5,22.5 H25.3" fill="none" stroke="#fff" stroke-width="3.2" stroke-linejoin="miter"/><polygon points="78.9,12.9 97.3,12.9 103.1,18.7 103.1,30.9 78.9,30.9" fill="#d9d9d9"/><polygon points="97.3,12.9 103.1,18.7 97.3,18.7" fill="#f4f4f4"/><polygon points="114.7,11.9 121.5,11.9 124,14.5 134,14.5 134,18.5 114.7,18.5" fill="#d9d9d9"/><polygon points="118.5,19.5 138.9,19.5 134.5,32 114.7,32" fill="#d9d9d9" stroke="#222832" stroke-width="1"/><polygon points="150.6,9.8 175,9.8 175,34.4 153.1,34.4 150.6,31.9" fill="#b8b8b8"/><rect x="156.7" y="9.8" width="12.6" height="9.4" fill="#f0f0f0" stroke="#222832" stroke-width="0.9"/><rect x="156.7" y="27.2" width="12.6" height="7.2" fill="#f0f0f0" stroke="#222832" stroke-width="0.9"/><rect x="158.1" y="28.8" width="1.9" height="3.8" fill="#111"/><polygon points="187.1,9.8 208,9.8 208,31.7 189.6,31.7 187.1,29.2" fill="#b8b8b8"/><rect x="190.4" y="9.8" width="13.9" height="8.3" fill="#f0f0f0" stroke="#222832" stroke-width="0.9"/><rect x="190.4" y="25.5" width="13.9" height="5.9" fill="#f0f0f0" stroke="#222832" stroke-width="0.9"/><rect x="191.8" y="27.1" width="1.9" height="2.5" fill="#111"/><polygon points="199,34 203.6,32.9 199.9,29.3" fill="#b8b8b8"/><polygon points="203.6,32.9 210.8,25.5 207.0,21.9 199.9,29.3" fill="#f9cf72" stroke="#222832" stroke-width="0.6"/><polygon points="210.8,25.5 212.9,23.3 209.1,19.7 207.0,21.9" fill="#e8505a"/><rect x="224.3" y="10.5" width="13.4" height="22" rx="1.3" fill="#666" stroke="#c8c8c8" stroke-width="1.2"/><rect x="229" y="30.3" width="3.5" height="1" fill="#c8c8c8"/><polygon points="233.6,24.5 233.6,21.8 237,21.8 238,23 242.5,23 242.5,24.5" fill="#f9cf72" stroke="#222832" stroke-width="0.7"/><polygon points="236,25 246,25 243,32.8 233.4,32.8" fill="#f9cf72" stroke="#222832" stroke-width="0.8"/><rect x="266.3" y="10.5" width="13.2" height="22" rx="1.3" fill="#666" stroke="#c8c8c8" stroke-width="1.2"/><rect x="271" y="30.3" width="3.5" height="1" fill="#c8c8c8"/><path d="M261.6,18.6 H270" stroke="#6cc0f4" stroke-width="2.8"/><polygon points="276.8,18.6 269.5,13.9 269.5,23.4" fill="#6cc0f4"/><rect x="299.8" y="9.8" width="14.2" height="8" fill="#f4f4f4" stroke="#222832" stroke-width="0.8"/><rect x="294.6" y="14" width="24.6" height="16.2" fill="#f0f0f0"/><rect x="294.6" y="21.5" width="24.6" height="8.7" fill="#b8b8b8"/><rect x="299.8" y="26.5" width="14.2" height="7.9" fill="#f4f4f4" stroke="#222832" stroke-width="0.6"/><rect x="300.8" y="27.5" width="12.2" height="5.6" fill="#7cc4f4"/><path d="M331,21.7 L343.2,14.8 V19.3 Q355.5,19.6 356,28.3 Q351,24.6 343.2,24.6 V29 Z" fill="#d9d9d9"/><path d="M408.5,21.7 L396.3,14.8 V19.3 Q384,19.6 383.5,28.3 Q388.5,24.6 396.3,24.6 V29 Z" fill="#6d737d"/><polygon points="364.90000000000003,19.8 372.7,19.8 368.8,24.2" fill="#d9d9d9"/><polygon points="418.8,19.8 426.59999999999997,19.8 422.7,24.2" fill="#9a9ea6"/><rect x="438.8" y="15" width="12.1" height="2.4" fill="#d9d9d9"/><polygon points="438.8,19.8 450.9,19.8 444.85,26.1" fill="#d9d9d9"/><polygon points="487.1,11.1 463.5,21.7 471.2,24.5 471.2,31.4 476.5,26.5 483.8,31.9" fill="#6cc0f4"/><path d="M471.2,24.5 L487.1,11.1 M476.5,26.5 L487.1,11.1" stroke="#3a80b8" stroke-width="0.9"/><circle cx="1991.6" cy="19.8" r="6.8" fill="none" stroke="#d9d9d9" stroke-width="2"/><path d="M1996.5,25 L2003,31.5" stroke="#d6a070" stroke-width="2.6"/><circle cx="2029.2" cy="15.8" r="5.6" fill="#5ab4f0"/><path d="M2017.5,32.1 Q2018,22.5 2029,22.5 Q2040.5,22.5 2040.6,32.1 Z" fill="#5ab4f0"/><path d="M2204,12 H2208 L2211,26 H2222 L2224,16 H2209" fill="none" stroke="#d9d9d9" stroke-width="1.8"/><circle cx="2212" cy="30.5" r="1.8" fill="#d9d9d9"/><circle cx="2221" cy="30.5" r="1.8" fill="#d9d9d9"/><path d="M2248,13 L2238.5,30.5 H2258 Z" fill="none" stroke="#d9d9d9" stroke-width="2.6" stroke-linejoin="round"/><circle cx="2248" cy="13" r="2.6" fill="#d9d9d9"/><circle cx="2238.5" cy="30.5" r="2.6" fill="#d9d9d9"/><circle cx="2258" cy="30.5" r="2.6" fill="#d9d9d9"/><polygon points="2268.5,19 2275.5,19 2272,23" fill="#d9d9d9"/><polygon points="2339.3,19 2346.3,19 2342.8,23" fill="#d9d9d9"/><circle cx="2317" cy="21.8" r="12.3" fill="#c9c9c9"/><path d="M2453,26.8 H2466.7" stroke="#e0e0e0" stroke-width="2"/><rect x="2489.5" y="11.9" width="18" height="14.3" fill="none" stroke="#e0e0e0" stroke-width="2"/><path d="M2527.5,13 L2542,27 M2542,13 L2527.5,27" stroke="#e0e0e0" stroke-width="2.2"/></svg>
<div class="t" style="left:38.2px;top:13.5px;font-size:11.5px;font-weight:bold;color:#fff;letter-spacing:0.6px;">CAD</div>
<div class="t" style="left:2311.8px;top:12.4px;font-size:19px;color:#5a5f68;transform:scaleX(0.9936);transform-origin:0 0;">?</div>
<svg class="r" style="left:0;top:0" width="400" height="300"><path d="M18.5,258.9 L28.8,235.6 M311.5,258.9 L321.1,235.6" stroke="#6b7585" stroke-width="1.3"/><path d="M233.5,241.5 L244.5,252.5 M244.5,241.5 L233.5,252.5" stroke="#b4b8c0" stroke-width="2.4"/><path d="M277,247.3 H295 M286,238.5 V256.2" stroke="#dcdcdc" stroke-width="2.6"/></svg>
<div class="t" style="left:42.4px;top:238.7px;font-size:18px;color:#e8e8e8;transform:scaleX(0.9365);transform-origin:0 0;">Start</div>
<div class="t" style="left:114.3px;top:238.7px;font-size:18px;color:#ffffff;transform:scaleX(0.9676);transform-origin:0 0;font-weight:bold;">figuras_geo*</div>
<div class="t" style="left:46.6px;top:280.3px;font-size:18px;color:#e2e2e2;transform:scaleX(0.8199);transform-origin:0 0;">[</div>
<div class="t" style="left:65.4px;top:280.3px;font-size:18px;color:#e2e2e2;transform:scaleX(0.8199);transform-origin:0 0;">]</div>
<div class="r" style="left:54.1px;top:286.6px;width:6.8px;height:1.4px;background:#e2e2e2;"></div>
<div class="t" style="left:71.2px;top:280.3px;font-size:18px;color:#e2e2e2;transform:scaleX(1.0010);transform-origin:0 0;">[Top][2D Wireframe]</div>
<div class="t" style="left:14.3px;top:951.6px;font-size:18px;color:#e4e4e4;transform-origin:0 0;transform:rotate(-90deg) scaleX(0.9644);">Layer Properties Manager</div>
<svg class="r" style="left:0;top:0" width="2556" height="1528"><polygon points="1093.30,509.50 1341.26,689.66 1246.55,981.16 940.05,981.16 845.34,689.66" fill="none" stroke="#00e6e6" stroke-width="1.15"/><circle cx="940.3" cy="981.0" r="153" fill="none" stroke="#e6e600" stroke-width="1.15"/><polygon points="940.30,981.0 1246.80,981.0 1093.55,715.56" fill="none" stroke="#00e600" stroke-width="1.15"/><rect x="940.3" y="674.3" width="433.1" height="306.7" fill="none" stroke="#0000ee" stroke-width="1.3"/><line x1="1246.4" y1="675.2" x2="1246.4" y2="981.0" stroke="#e00000" stroke-width="1.2"/><line x1="1015" y1="981.0" x2="1246.4" y2="981.0" stroke="#1e46d0" stroke-width="1.4"/><line x1="940.3" y1="674.3" x2="940.3" y2="906" stroke="#3a10b8" stroke-width="1.4"/><line x1="940.3" y1="906" x2="940.3" y2="981.0" stroke="#cdb8ec" stroke-width="1.5"/><line x1="940.3" y1="981.0" x2="1015" y2="981.0" stroke="#b4c8f4" stroke-width="1.6"/><rect x="933.9" y="974.2" width="13" height="13" fill="none" stroke="#d4d4d4" stroke-width="1.3"/><path d="M1020.3,960.6 L1038.3,979 M1038.3,960.6 L1020.3,979" stroke="#e0e0e0" stroke-width="1.3"/><path d="M942,882.5 L951,891.5 L960.3,883 M951,891.5 V900.8" fill="none" stroke="#e0e0e0" stroke-width="1.3"/><path d="M1621.2,1156.4 H1680.9 M1690.2,1156.4 H1750 M1685.5,1092 V1151.8 M1685.5,1161 V1220.6" stroke="#ee00ee" stroke-width="1.3"/><rect x="1681.2" y="1152" width="8.6" height="8.6" fill="none" stroke="#ee00ee" stroke-width="1.3"/><rect x="2463" y="291.8" width="16" height="5.6" fill="#1a1d22"/><rect x="2464.2" y="292.9" width="13.6" height="3.4" fill="#e6e6e6"/><rect x="2497" y="283.5" width="11.5" height="11.5" fill="none" stroke="#1a1d22" stroke-width="3.2"/><rect x="2494" y="287.5" width="10.5" height="11" fill="#1a1d22"/><rect x="2497" y="283.5" width="11.5" height="11.5" fill="none" stroke="#e6e6e6" stroke-width="1.3"/><rect x="2495.2" y="288.6" width="8.2" height="8.6" fill="none" stroke="#e6e6e6" stroke-width="2.4"/><path d="M2524.5,285.5 L2537,297.5 M2537,285.5 L2524.5,297.5" stroke="#1a1d22" stroke-width="4.6"/><path d="M2524.5,285.5 L2537,297.5 M2537,285.5 L2524.5,297.5" stroke="#e6e6e6" stroke-width="2.6"/><circle cx="2427.4" cy="428" r="80" fill="none" stroke="#434a54" stroke-width="19.5"/><rect x="2389" y="389" width="77.8" height="77.6" fill="#a8abb0"/><rect x="2403.8" y="404" width="48.4" height="48.2" fill="#9ea1a9"/><rect x="2324" y="553" width="0" height="0"/><rect x="2394.5" y="559" width="68" height="25" rx="4" fill="#9a9eaa" stroke="#888c96" stroke-width="1"/><polygon points="2446,567 2456,567 2451,573" fill="none" stroke="#70747c" stroke-width="1"/><rect x="2502" y="617" width="45.8" height="311" rx="3.5" fill="#5c6168"/><circle cx="2538.8" cy="624.5" r="4.6" fill="#565b62" stroke="#4b5058" stroke-width="1"/><path d="M2537,622.7 L2540.6,626.3 M2540.6,622.7 L2537,626.3" stroke="#4b5058" stroke-width="1"/><circle cx="2538.8" cy="918.6" r="4.6" fill="#565b62" stroke="#4b5058" stroke-width="1"/><path d="M2536.5,918.6 H2541" stroke="#4b5058" stroke-width="1"/><path d="M2525,642.8 H2541.3 V659 A16.3,16.3 0 1 1 2525,642.8 Z" fill="#585d65" stroke="#4b5058" stroke-width="1.6"/><circle cx="2525.2" cy="659" r="9" fill="#5a5f67" stroke="#4b5058" stroke-width="1.6"/><path d="M2519,665.5 L2514,671 M2531.4,665.5 L2536.5,671" stroke="#4b5058" stroke-width="1.6"/><polygon points="2522.8,687.0 2529.8,687.0 2526.3,690.5" fill="#4b5058"/><polygon points="2522.8,792.5 2529.8,792.5 2526.3,796" fill="#4b5058"/><polygon points="2522.8,849.2 2529.8,849.2 2526.3,852.7" fill="#4b5058"/><path d="M2507.5,699.4 H2542 M2507.5,861.5 H2542" stroke="#656a71" stroke-width="1"/><path d="M2513,726 Q2516,740 2526,740.3 Q2537,740 2539,728 L2541,713 Q2540.5,709.5 2537.8,711 L2535.5,722 L2534.5,709 Q2533,706 2530.5,708 L2529.5,721 L2528.5,707 Q2526.5,704 2524.5,707 L2524,721 L2521.5,709.5 Q2519.5,707 2517.5,709.5 L2518.5,725 L2512.5,720.5 Q2507.5,718.5 2509,723 Z" fill="#585d65" stroke="#4b5058" stroke-width="1.5"/><path d="M2509,748.5 L2526,765.5 M2526,748.5 L2509,765.5" stroke="#4b5058" stroke-width="1.6"/><path d="M2508,747.3 h4 v4 M2531,747.3 h-4 v4 M2508,766.5 h4 v-4" fill="none" stroke="#4b5058" stroke-width="1.8"/><circle cx="2531.4" cy="769.4" r="6.2" fill="#585d65" stroke="#4b5058" stroke-width="1.6"/><path d="M2535.8,773.8 L2541,779" stroke="#4b5058" stroke-width="2.6"/><ellipse cx="2525" cy="823" rx="16.5" ry="6.5" fill="none" stroke="#4b5058" stroke-width="1.6"/><rect x="2522.5" y="809" width="5" height="28" fill="#585d65" stroke="#4b5058" stroke-width="1.3"/><polygon points="2525,804 2518.5,811 2531.5,811" fill="#585d65" stroke="#4b5058" stroke-width="1.3"/><polygon points="2508,823.5 2514,819 2514,828" fill="#4b5058"/><rect x="2507.6" y="868" width="9.5" height="9" fill="none" stroke="#4b5058" stroke-width="1.4"/><rect x="2519.6" y="868" width="9.5" height="9" fill="none" stroke="#4b5058" stroke-width="1.4"/><rect x="2531.6" y="868" width="9.5" height="9" fill="none" stroke="#4b5058" stroke-width="1.4"/><rect x="2508" y="881" width="24" height="20" fill="none" stroke="#4b5058" stroke-width="1.4"/><polygon points="2516,885 2525,891 2516,897" fill="#4b5058"/></svg>
<div class="t" style="left:2417.5px;top:328.9px;font-size:32px;color:#a5a8ad;transform:scaleX(0.8871);transform-origin:0 0;font-weight:bold;">N</div>
<div class="t" style="left:2417.5px;top:498.5px;font-size:32px;color:#a5a8ad;transform:scaleX(0.9604);transform-origin:0 0;font-weight:bold;">S</div>
<div class="t" style="left:2327.8px;top:412.7px;font-size:33px;color:#a5a8ad;transform:scaleX(1.0017);transform-origin:0 0;font-weight:bold;">W</div>
<div class="t" style="left:2503.4px;top:412.7px;font-size:33px;color:#a5a8ad;transform:scaleX(0.8586);transform-origin:0 0;font-weight:bold;">E</div>
<div class="t" style="left:2412.0px;top:417.4px;font-size:22.5px;color:#575c64;transform:scaleX(0.7067);transform-origin:0 0;font-weight:bold;">TOP</div>
<div class="t" style="left:2400.3px;top:562.8px;font-size:16.5px;color:#62666e;transform:scaleX(0.9196);transform-origin:0 0;">WCS</div>
<svg class="r" style="left:0;top:0" width="2556" height="1528"><rect x="546.2" y="1297.5" width="37" height="135" rx="3" fill="#282e38"/><path d="M551.8,1305.9 H578" stroke="#c8c8c8" stroke-width="2.2" stroke-dasharray="2.2,2.9"/><path d="M558,1326.2 L570.2,1337.7 M570.2,1326.2 L558,1337.7" stroke="#b4b4b4" stroke-width="2.5"/><path d="M555,1376.6 L565.5,1366.2" stroke="#b4b4b4" stroke-width="3.6" stroke-linecap="round"/><circle cx="569.4" cy="1362.4" r="5.6" fill="#b4b4b4"/><circle cx="571.3" cy="1360.3" r="3.1" fill="#282e38"/><polygon points="571.3,1357.2 576,1354.5 577,1361 574.4,1360.3" fill="#282e38"/><rect x="583.5" y="1298" width="461.5" height="0" fill="none"/></svg>
<div class="r" style="left:583.5px;top:1298px;width:1461.5px;height:103px;background:#98999b;border-top-right-radius:2px;"></div>
<div class="r" style="left:583.5px;top:1401px;width:1461.5px;height:2px;background:#1e232b;"></div>
<div class="r" style="left:583.5px;top:1403px;width:1461.5px;height:29.6px;background:#bebfc1;border-bottom-right-radius:2px;"></div>
<svg class="r" style="left:0;top:0" width="2556" height="1528"><rect x="590.5" y="1410.5" width="23" height="17" fill="none" stroke="#505050" stroke-width="1.2"/><rect x="590.5" y="1410.5" width="23" height="3.5" fill="#505050"/><path d="M593,1418 L596.5,1420.5 L593,1423 M597.5,1424 H602" fill="none" stroke="#505050" stroke-width="0.9"/><polygon points="617.5,1416.5 628,1416.5 622.75,1422" fill="#505050"/><polygon points="2028.5,1421 2039.5,1421 2034,1415.5" fill="#505050"/></svg>
<div class="t" style="left:587.2px;top:1309.5px;font-size:18.29px;font-family:'Liberation Mono',monospace;color:#0c0c0c;">Select objects: Specify opposite corner: 1 found</div>
<div class="t" style="left:587.2px;top:1332.5px;font-size:18.29px;font-family:'Liberation Mono',monospace;color:#0c0c0c;">Select objects:</div>
<div class="t" style="left:587.2px;top:1355.5px;font-size:18.29px;font-family:'Liberation Mono',monospace;color:#0c0c0c;">Command: *Cancel*</div>
<div class="t" style="left:587.2px;top:1378.5px;font-size:18.29px;font-family:'Liberation Mono',monospace;color:#0c0c0c;">Command: *Cancel*</div>
<div class="t" style="left:638px;top:1409.8px;font-size:18.29px;font-family:'Liberation Mono',monospace;font-style:italic;color:#6a6a6a;">Type a command</div>
<div class="t" style="left:42.4px;top:1450.9px;font-size:18px;color:#ffffff;transform:scaleX(1.0289);transform-origin:0 0;font-weight:bold;">Model</div>
<div class="t" style="left:132.4px;top:1450.9px;font-size:18px;color:#e8e8e8;transform:scaleX(0.9507);transform-origin:0 0;">Layout1</div>
<div class="t" style="left:231.2px;top:1450.9px;font-size:18px;color:#e8e8e8;transform:scaleX(0.9679);transform-origin:0 0;">Layout2</div>
<svg class="r" style="left:0;top:0" width="2556" height="1528"><path d="M208.1,1469.8 L218.8,1445.9 M306.9,1469.8 L317.7,1445.9 M367,1469.8 L377.8,1445.9" stroke="#5d6675" stroke-width="1.3"/><path d="M332.7,1458.2 H351.2 M342,1449.2 V1467.2" stroke="#dcdcdc" stroke-width="2.8"/><rect x="1604.2" y="1486" width="71.7" height="35.7" fill="#3b4453"/><rect x="1682.1" y="1486" width="95.8" height="35.7" fill="#3b4453"/><rect x="1784" y="1486" width="35.6" height="35.7" fill="#3b4453"/><rect x="1822.2" y="1486" width="155.5" height="35.7" fill="#3b4453"/><rect x="1980.7" y="1486" width="95.1" height="35.7" fill="#3b4453"/><rect x="2082.9" y="1486" width="157.2" height="35.7" fill="#3b4453"/><rect x="2245.8" y="1486" width="60.0" height="35.7" fill="#3b4453"/><rect x="2308.1" y="1486" width="36.1" height="35.7" fill="#3b4453"/><rect x="2350" y="1486" width="35.8" height="35.7" fill="#3b4453"/><rect x="2390.2" y="1486" width="83.8" height="35.7" fill="#3b4453"/><rect x="2477.8" y="1486" width="72.3" height="35.7" fill="#3b4453"/><rect x="1858.9" y="1487" width="33.8" height="34.3" fill="#5d8fc6"/><rect x="1980.7" y="1487" width="34.3" height="34.3" fill="#5d8fc6"/><rect x="2017" y="1487" width="33.8" height="34.3" fill="#5d8fc6"/><rect x="2082.9" y="1487" width="34.1" height="34.3" fill="#5d8fc6"/><polygon points="1760.0,1500.5 1771.4,1500.5 1765.7,1506.8" fill="#dcdcdc"/><polygon points="1900.5,1500.5 1911.9,1500.5 1906.2,1506.8" fill="#dcdcdc"/><polygon points="1960.3999999999999,1500.5 1971.8,1500.5 1966.1,1506.8" fill="#dcdcdc"/><polygon points="2058.5,1500.5 2069.8999999999996,1500.5 2064.2,1506.8" fill="#dcdcdc"/><polygon points="2222.4,1500.5 2233.7999999999997,1500.5 2228.1,1506.8" fill="#dcdcdc"/><polygon points="2288.3,1500.5 2299.7,1500.5 2294,1506.8" fill="#dcdcdc"/><path d="M1691.5,1492.1 V1515.2 M1699.3,1492.1 V1515.2 M1707,1492.1 V1515.2 M1687.7,1496 H1710.9 M1687.7,1503.6 H1710.9 M1687.7,1511.3 H1710.9" stroke="#dcdcdc" stroke-width="1.2"/><rect x="1726.6" y="1495.1" width="3" height="3" fill="#dcdcdc"/><rect x="1734.1" y="1495.1" width="3" height="3" fill="#dcdcdc"/><rect x="1741.6" y="1495.1" width="3" height="3" fill="#dcdcdc"/><rect x="1726.6" y="1502.4" width="3" height="3" fill="#dcdcdc"/><rect x="1734.1" y="1502.4" width="3" height="3" fill="#dcdcdc"/><rect x="1741.6" y="1502.4" width="3" height="3" fill="#dcdcdc"/><rect x="1726.6" y="1509.7" width="3" height="3" fill="#dcdcdc"/><rect x="1734.1" y="1509.7" width="3" height="3" fill="#dcdcdc"/><rect x="1741.6" y="1509.7" width="3" height="3" fill="#dcdcdc"/><path d="M1795.5,1493 V1505.8 M1790.4,1499.4 H1800.5" stroke="#dcdcdc" stroke-width="1.4"/><rect x="1799.5" y="1507.2" width="14.1" height="5.4" fill="#dcdcdc"/><rect x="1801" y="1508.2" width="1.5" height="3.4" fill="#555"/><path d="M1828.6,1492.1 V1515.3 H1851.8" fill="none" stroke="#dcdcdc" stroke-width="1.3"/><rect x="1828.6" y="1508.5" width="6.8" height="6.8" fill="none" stroke="#dcdcdc" stroke-width="1.3"/><circle cx="1873" cy="1504.5" r="8.2" fill="none" stroke="#f0f0f0" stroke-width="1.4"/><path d="M1873,1504 L1881,1496 M1873,1504 H1888" stroke="#f0f0f0" stroke-width="1.4"/><path d="M1926.8,1493.7 L1944.9,1511.8" stroke="#e05050" stroke-width="1.3"/><path d="M1936.4,1492 V1514.5" stroke="#50c060" stroke-width="1.3"/><rect x="1934" y="1500.5" width="4.8" height="4.8" fill="#3b4453" stroke="#f0f0f0" stroke-width="1"/><path d="M1986.4,1512.2 L2003.9,1495.1 M1986.4,1512.2 H2009.5" stroke="#f0f0f0" stroke-width="1.4"/><rect x="1992.5" y="1501.5" width="4.6" height="4.6" fill="#f0f0f0"/><rect x="2025" y="1495.1" width="20.6" height="20.1" fill="none" stroke="#f0f0f0" stroke-width="1.4"/><rect x="2022" y="1492.5" width="6.6" height="6" fill="#5d8fc6" stroke="#f0f0f0" stroke-width="1.3"/><polygon points="2098.25,1492.5 2101.75,1507.5 2108.8,1515.5 2098.25,1511.0 2087.7,1515.5 2094.75,1507.5" fill="#f4f4f4"/><circle cx="2108" cy="1497.8" r="3.8" fill="none" stroke="#f4f4f4" stroke-width="1.3"/><polygon points="2133.05,1492.5 2136.55,1507.5 2142,1515.5 2133.05,1511.0 2124.1,1515.5 2129.55,1507.5" fill="#dcdcdc"/><polygon points="2144,1492.5 2139,1499 2142,1499 2139.5,1504 2146,1497 2143,1497 2146,1492.5" fill="#dcdcdc"/><polygon points="2171.55,1492.5 2175.05,1507.5 2182.6,1515.5 2171.55,1511.0 2160.5,1515.5 2168.05,1507.5" fill="#dcdcdc"/></svg>
<svg class="r" style="left:0;top:0" width="2556" height="1528"><polygon points="2276.2,1506.4 2271.9,1509.3 2270.9,1514.3 2265.9,1513.3 2261.6,1516.2 2258.7,1511.9 2253.7,1510.9 2254.7,1505.9 2251.8,1501.6 2256.1,1498.7 2257.1,1493.7 2262.1,1494.7 2266.4,1491.8 2269.3,1496.1 2274.3,1497.1 2273.3,1502.1" fill="#dcdcdc"/><circle cx="2264" cy="1504" r="4" fill="#3b4453"/><path d="M2313.5,1503.7 H2337.3 M2325.4,1491.9 V1515.5" stroke="#dcdcdc" stroke-width="2.8"/><rect x="2356.1" y="1491.9" width="9.9" height="10" fill="none" stroke="#dcdcdc" stroke-width="1.2"/><circle cx="2374.3" cy="1502.6" r="5.3" fill="none" stroke="#dcdcdc" stroke-width="1.2"/><polygon points="2365.7,1506.8 2371.4,1516 2360,1516" fill="none" stroke="#dcdcdc" stroke-width="1.2"/><polygon points="2394,1486.5 2422,1486.5 2429.9,1494 2429.9,1516 2394,1516" fill="#3a6db4"/><rect x="2394" y="1508" width="14" height="10" fill="#f0b429"/><path d="M2403,1488 V1505 M2395,1496.5 H2416" stroke="#c8dcf0" stroke-width="1.3"/><circle cx="2403" cy="1496.5" r="2.5" fill="none" stroke="#c8dcf0" stroke-width="1.3"/><path d="M2408,1512 L2414,1518.5 L2428,1505" fill="none" stroke="#3dbb4a" stroke-width="3.4"/><path d="M2447,1497 A9.5,9.5 0 1 1 2452,1508" fill="none" stroke="#dcdcdc" stroke-width="1.3"/><path d="M2452.5,1492 V1500 H2457" fill="none" stroke="#dcdcdc" stroke-width="1.2"/><rect x="2440" y="1502" width="10" height="13" fill="#f0f0f0"/><rect x="2440" y="1510" width="10" height="5" fill="#f0b429"/><circle cx="2458.5" cy="1512" r="5" fill="#3c9be8"/><rect x="2457.8" y="1510" width="1.4" height="4.5" fill="#fff"/><rect x="2484.6" y="1495.5" width="23" height="16" fill="none" stroke="#dcdcdc" stroke-width="1.3"/><path d="M2489,1508 L2494,1503 M2489,1508 V1504 M2489,1508 H2493 M2503,1499 L2498,1504 M2503,1499 V1503 M2503,1499 H2499" fill="none" stroke="#dcdcdc" stroke-width="1.3"/><path d="M2520,1494.4 H2544 M2520,1503.4 H2544 M2520,1512.2 H2544" stroke="#dcdcdc" stroke-width="2.6"/></svg>
<div class="t" style="left:1610.2px;top:1495.1px;font-size:19px;color:#f2f2f2;transform:scaleX(0.8939);transform-origin:0 0;-webkit-text-stroke:0.4px #f2f2f2;">MODEL</div>
<div class="t" style="left:2197.9px;top:1495.9px;font-size:18px;color:#f2f2f2;transform:scaleX(0.7273);transform-origin:0 0;-webkit-text-stroke:0.3px #f2f2f2;">1:1</div>
</body></html>
